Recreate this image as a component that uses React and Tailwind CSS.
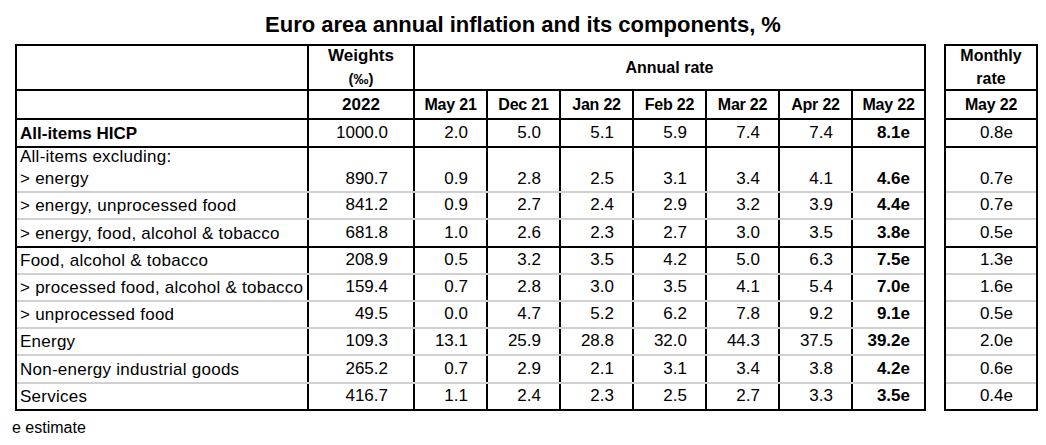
const months = ["May 21", "Dec 21", "Jan 22", "Feb 22", "Mar 22", "Apr 22", "May 22"]
const dataCols = ["w-[73px]", "w-[73px]", "w-[73px]", "w-[73px]", "w-[73px]", "w-[73px]", "w-[71px]"]

const rows = [
  { label: "All-items HICP", bold: true, w: "1000.0", v: ["2.0", "5.0", "5.1", "5.9", "7.4", "7.4", "8.1e"], m: "0.8e", h: "h-[28px]", line: "border-black" },
  { top: "All-items excluding:", label: "> energy", w: "890.7", v: ["0.9", "2.8", "2.5", "3.1", "3.4", "4.1", "4.6e"], m: "0.7e", h: "h-[45px]", line: "border-[#d0d0d0]" },
  { label: "> energy, unprocessed food", w: "841.2", v: ["0.9", "2.7", "2.4", "2.9", "3.2", "3.9", "4.4e"], m: "0.7e", h: "h-[27px]", line: "border-[#d0d0d0]" },
  { label: "> energy, food, alcohol & tobacco", w: "681.8", v: ["1.0", "2.6", "2.3", "2.7", "3.0", "3.5", "3.8e"], m: "0.5e", h: "h-[28px]", line: "border-black" },
  { label: "Food, alcohol & tobacco", w: "208.9", v: ["0.5", "3.2", "3.5", "4.2", "5.0", "6.3", "7.5e"], m: "1.3e", h: "h-[27px]", line: "border-[#d0d0d0]" },
  { label: "> processed food, alcohol & tobacco", w: "159.4", v: ["0.7", "2.8", "3.0", "3.5", "4.1", "5.4", "7.0e"], m: "1.6e", h: "h-[27px]", line: "border-[#d0d0d0]" },
  { label: "> unprocessed food", w: "49.5", v: ["0.0", "4.7", "5.2", "6.2", "7.8", "9.2", "9.1e"], m: "0.5e", h: "h-[27px]", line: "border-[#d0d0d0]" },
  { label: "Energy", w: "109.3", v: ["13.1", "25.9", "28.8", "32.0", "44.3", "37.5", "39.2e"], m: "2.0e", h: "h-[27px]", line: "border-[#d0d0d0]" },
  { label: "Non-energy industrial goods", w: "265.2", v: ["0.7", "2.9", "2.1", "3.1", "3.4", "3.8", "4.2e"], m: "0.6e", h: "h-[28px]", line: "border-[#d0d0d0]" },
  { label: "Services", w: "416.7", v: ["1.1", "2.4", "2.3", "2.5", "2.7", "3.3", "3.5e"], m: "0.4e", h: "h-[25px]", line: "" },
]

function AnnualTable () {
  return (
    <div className="w-[911px] border-2 border-black">
      <div className="flex h-[45px] border-b-2 border-black">
        <div className="w-[292px] border-r-2 border-black"></div>
        <div className="w-[106px] border-r-2 border-black flex flex-col items-center justify-center font-bold leading-[23px] pb-[2px]">
          <span className="text-[17px]">Weights</span>
          <span className="text-[15px]">(‰)</span>
        </div>
        <div className="w-[509px] flex items-center justify-center font-bold text-[16px]">Annual rate</div>
      </div>
      <div className="flex h-[29px] border-b-2 border-black">
        <div className="w-[292px] border-r-2 border-black"></div>
        <div className="w-[106px] border-r-2 border-black flex items-center justify-center font-bold text-[17px]">2022</div>
        {months.map((m, i) => (
          <div key={m} className={`${dataCols[i]} ${i < 6 ? "border-r-2 border-black" : ""} flex items-center justify-center font-bold text-[16px] tracking-[-0.2px]`}>{m}</div>
        ))}
      </div>
      {rows.map((r, k) => (
        <div key={k} className={`flex ${r.h} ${r.line ? "border-b-2 " + r.line : ""}`}>
          <div className={`w-[292px] border-r-2 border-black pl-[3px] flex flex-col justify-end pb-[1px] leading-[22px] text-[17px] ${r.top ? "" : "justify-center"} ${r.bold ? "font-bold" : "tracking-[0.25px]"}`}>
            {r.top && <span>{r.top}</span>}
            <span className="whitespace-nowrap">{r.label}</span>
          </div>
          <div className={`w-[106px] border-r-2 border-black flex justify-end pr-[25px] pb-[1px] leading-[22px] text-[17px] ${r.top ? "items-end" : "items-center"}`}>{r.w}</div>
          {r.v.map((x, i) => (
            <div key={i} className={`${dataCols[i]} ${i < 6 ? "border-r-2 border-black pr-[18px]" : "pr-[14px] font-bold"} flex justify-end pb-[1px] leading-[22px] text-[17px] ${r.top ? "items-end" : "items-center"}`}>{x}</div>
          ))}
        </div>
      ))}
    </div>
  )
}

function MonthlyTable () {
  return (
    <div className="w-[94px] border-2 border-black">
      <div className="flex flex-col items-center justify-center h-[45px] border-b-2 border-black font-bold text-[16px] leading-[23px] pb-[1px]">
        <span>Monthly</span>
        <span>rate</span>
      </div>
      <div className="flex items-center justify-center h-[29px] border-b-2 border-black font-bold text-[16px] tracking-[-0.2px]">May 22</div>
      {rows.map((r, k) => (
        <div key={k} className={`flex justify-end pr-[23px] pb-[1px] leading-[22px] text-[17px] ${r.top ? "items-end" : "items-center"} ${r.h} ${r.line ? "border-b-2 " + r.line : ""}`}>{r.m}</div>
      ))}
    </div>
  )
}

export default function App () {
  return (
    <div className="w-[1046px] h-[445px] bg-white text-black font-['Liberation_Sans',Arial,sans-serif]">
      <div className="h-[44px] pt-[12px] text-center text-[22px] font-bold leading-[25px]">
        Euro area annual inflation and its components, %
      </div>
      <div className="flex gap-[18px] pl-[15px]">
        <AnnualTable />
        <MonthlyTable />
      </div>
      <p className="pl-[12px] pt-[5px] text-[16px] leading-normal">e estimate</p>
    </div>
  )
}
